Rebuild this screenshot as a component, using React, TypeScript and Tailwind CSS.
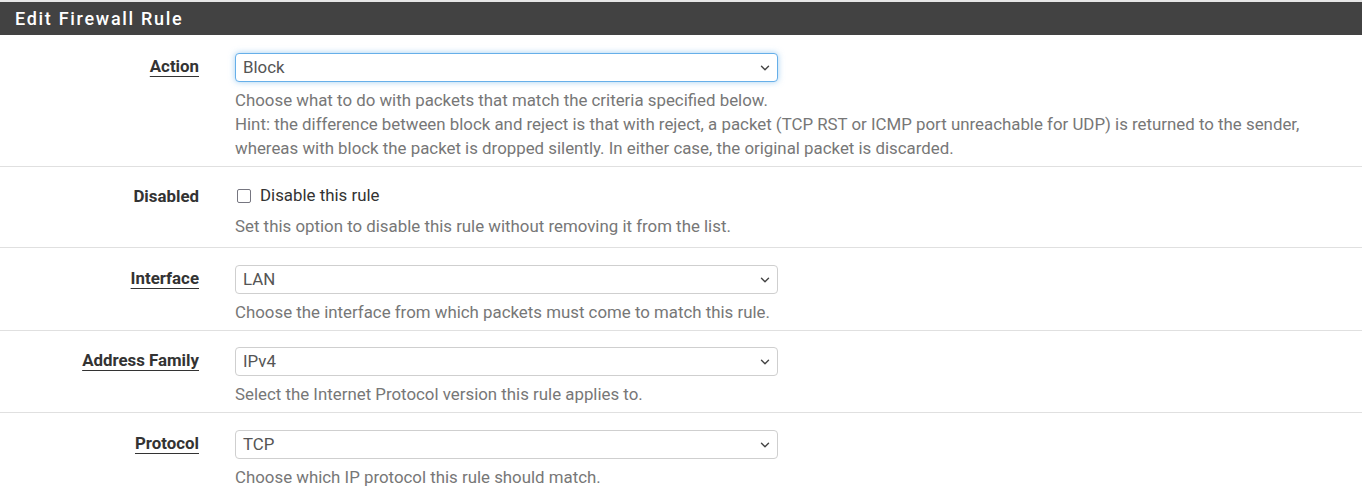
import { ChevronDown } from 'lucide-react'

interface Row {
  label: string
  value: string
  help: string[]
  pad: string
}

function Select({ value, focused }: { value: string; focused?: boolean }) {
  return (
    <div
      className={
        'flex items-center justify-between w-[543px] h-[29px] pl-[7px] pr-[5px] bg-white rounded-[4px] border text-[16.85px] text-[#555] ' +
        (focused
          ? 'border-[#66afe9] shadow-[0_0_6px_rgba(102,175,233,0.6)]'
          : 'border-[#cfcfcf]')
      }
    >
      <span>{value}</span>
      <ChevronDown className="h-[14px] w-[14px] text-[#444]" strokeWidth={2.4} />
    </div>
  )
}

function Label({ text, underline = true }: { text: string; underline?: boolean }) {
  return (
    <div className="w-[199px] shrink-0 text-right leading-[27px]">
      <span
        className={
          'text-[16.85px] font-bold text-[#333] ' +
          (underline ? 'underline underline-offset-[4px] decoration-1' : '')
        }
      >
        {text}
      </span>
    </div>
  )
}

function Help({ lines }: { lines: string[] }) {
  return (
    <div className="mt-[6px] text-[16.85px] leading-[24px] text-[#777]">
      {lines.map((l) => (
        <div key={l}>{l}</div>
      ))}
    </div>
  )
}

const rows: Row[] = [
  {
    label: 'Interface',
    value: 'LAN',
    help: ['Choose the interface from which packets must come to match this rule.'],
    pad: 'pt-[17px]',
  },
  {
    label: 'Address Family',
    value: 'IPv4',
    help: ['Select the Internet Protocol version this rule applies to.'],
    pad: 'pt-[16px]',
  },
  {
    label: 'Protocol',
    value: 'TCP',
    help: ['Choose which IP protocol this rule should match.'],
    pad: 'pt-[17px]',
  },
]

export default function App() {
  return (
    <div className="w-[1363px] h-[492px] overflow-hidden bg-white font-['Roboto',sans-serif]">
      <div className="border-t-[2px] border-[#e6e6e6] mr-[1px]">
        {/* Header */}
        <div className="h-[33px] bg-[#424242] flex items-center pl-[15px]">
          <h2 className="text-[18px] font-medium text-white tracking-[1.7px]">
            Edit Firewall Rule
          </h2>
        </div>

        {/* Action */}
        <div className="flex gap-[36px] pt-[18px] pb-[6px] border-b border-[#e0e0e0]">
          <Label text="Action" />
          <div>
            <Select value="Block" focused />
            <Help
              lines={[
                'Choose what to do with packets that match the criteria specified below.',
                'Hint: the difference between block and reject is that with reject, a packet (TCP RST or ICMP port unreachable for UDP) is returned to the sender,',
                'whereas with block the packet is dropped silently. In either case, the original packet is discarded.',
              ]}
            />
          </div>
        </div>

        {/* Disabled */}
        <div className="flex gap-[36px] pt-[14px] pb-[9px] border-b border-[#e0e0e0]">
          <div className="w-[199px] shrink-0 text-right leading-[30px]">
            <span className="text-[16.85px] font-bold text-[#333]">Disabled</span>
          </div>
          <div>
            <label className="flex items-center h-[30px] pl-[2px] gap-[9px] text-[16.85px] text-[#333]">
              <span className="w-[14px] h-[14px] rounded-[2px] border-[1.5px] border-[#767680] bg-white" />
              Disable this rule
            </label>
            <div className="mt-[3px] text-[16.85px] leading-[24px] text-[#777]">
              Set this option to disable this rule without removing it from the list.
            </div>
          </div>
        </div>

        {rows.map((r) => (
          <div
            key={r.label}
            className={'flex gap-[36px] pb-[6px] border-b border-[#e0e0e0] ' + r.pad}
          >
            <Label text={r.label} />
            <div>
              <Select value={r.value} />
              <Help lines={r.help} />
            </div>
          </div>
        ))}
      </div>
    </div>
  )
}
